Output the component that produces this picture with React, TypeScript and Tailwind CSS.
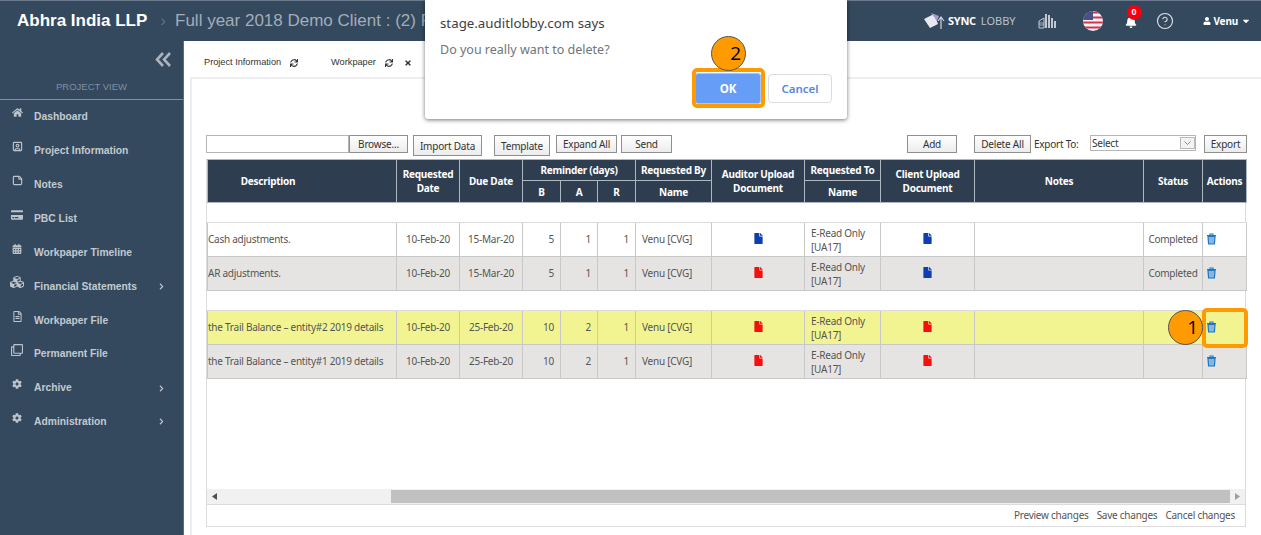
import type { ReactNode } from "react";
import { CircleHelp, SquareUser, StickyNote } from "lucide-react";
import {
  FaBell,
  FaCalendarAlt,
  FaCaretDown,
  FaChevronRight,
  FaCog,
  FaCreditCard,
  FaCubes,
  FaFile,
  FaHome,
  FaRegClone,
  FaRegFileAlt,
  FaSync,
  FaTimes,
  FaUser,
} from "react-icons/fa";

const sans = "font-['Liberation_Sans',Arial,sans-serif]";
const ui = "font-['Noto_Sans','Open_Sans',sans-serif]";

const menu: { label: string; icon: ReactNode; arrow?: boolean }[] = [
  { label: "Dashboard", icon: <FaHome size={11} /> },
  { label: "Project Information", icon: <SquareUser size={11} strokeWidth={2.5} /> },
  { label: "Notes", icon: <StickyNote size={11} strokeWidth={2.5} /> },
  { label: "PBC List", icon: <FaCreditCard size={12} /> },
  { label: "Workpaper Timeline", icon: <FaCalendarAlt size={10} /> },
  { label: "Financial Statements", icon: <FaCubes size={14} />, arrow: true },
  { label: "Workpaper File", icon: <FaRegFileAlt size={11} /> },
  { label: "Permanent File", icon: <FaRegClone size={12} /> },
  { label: "Archive", icon: <FaCog size={10} />, arrow: true },
  { label: "Administration", icon: <FaCog size={10} />, arrow: true },
];

type Row = {
  desc: string;
  requested: string;
  due: string;
  b: number;
  a: number;
  r: number;
  auditor: "blue" | "red";
  client: "blue" | "red";
  status: string;
  bg: string;
};

const rowsA: Row[] = [
  { desc: "Cash adjustments.", requested: "10-Feb-20", due: "15-Mar-20", b: 5, a: 1, r: 1, auditor: "blue", client: "blue", status: "Completed", bg: "bg-white" },
  { desc: "AR adjustments.", requested: "10-Feb-20", due: "15-Mar-20", b: 5, a: 1, r: 1, auditor: "red", client: "blue", status: "Completed", bg: "bg-[#e5e4e2]" },
];

const rowsB: Row[] = [
  { desc: "the Trail Balance – entity#2 2019 details", requested: "10-Feb-20", due: "25-Feb-20", b: 10, a: 2, r: 1, auditor: "red", client: "red", status: "", bg: "bg-[#f2f491]" },
  { desc: "the Trail Balance – entity#1 2019 details", requested: "10-Feb-20", due: "25-Feb-20", b: 10, a: 2, r: 1, auditor: "red", client: "red", status: "", bg: "bg-[#e5e4e2]" },
];

function Btn({ children, className }: { children: ReactNode; className: string }) {
  return (
    <button
      type="button"
      className={`h-[18px] border border-[#8f8f8f] bg-gradient-to-b from-white to-[#ececec] text-[10px] leading-none tracking-[-0.2px] text-[#333] ${className}`}
    >
      {children}
    </button>
  );
}

function Trash() {
  return (
    <svg width="11" height="12" viewBox="0 0 11 12" className="mx-auto block -translate-x-[13px] -translate-y-[1px]">
      <path d="M2 3.5h7l-.6 7.5H2.6z" fill="#8fb4d8" stroke="#1a78c8" strokeWidth="1.2" />
      <path d="M1 2.5h9M4 2.3V1h3v1.3" fill="none" stroke="#1a78c8" strokeWidth="1.1" />
    </svg>
  );
}

function Doc({ color }: { color: "blue" | "red" }) {
  return <FaFile size={11} className={`mx-auto -translate-y-[1px] ${color === "red" ? "text-[#f50f0f]" : "text-[#0d3fb0]"}`} />;
}

const th = "border border-[#aeb6bf] px-0 text-center align-middle font-bold text-white";
const td = "border border-[#c8c8c8] px-[6px] align-middle";

function DataRow({ row }: { row: Row }) {
  return (
    <tr className={`h-[34px] ${row.bg}`}>
      <td className={`${td} !pl-0 whitespace-nowrap`}>{row.desc}</td>
      <td className={`${td} !px-0 text-center`}>{row.requested}</td>
      <td className={`${td} !px-0 text-center`}>{row.due}</td>
      <td className={`${td} text-right`}>{row.b}</td>
      <td className={`${td} text-right`}>{row.a}</td>
      <td className={`${td} text-right`}>{row.r}</td>
      <td className={`${td}`}>Venu [CVG]</td>
      <td className={td}>
        <Doc color={row.auditor} />
      </td>
      <td className={`${td} leading-[14px]`}>
        E-Read Only
        <br />
        [UA17]
      </td>
      <td className={td}>
        <Doc color={row.client} />
      </td>
      <td className={td} />
      <td className={`${td} !px-[4px] text-center`}>{row.status}</td>
      <td className={td}>
        <Trash />
      </td>
    </tr>
  );
}

function SpacerRow({ h }: { h: string }) {
  return (
    <tr className={h}>
      <td colSpan={13} className="border-b border-[#dcdcdc]" />
    </tr>
  );
}

export default function App() {
  return (
    <div className={`relative flex h-[535px] w-[1261px] flex-col overflow-hidden bg-white ${sans}`}>
      <header className="flex h-[41px] shrink-0 items-center border-t border-[#6b7a8c] bg-[#34495e] pl-[17px] pr-[10px]">
        <span className="text-[17px] font-bold text-white">Abhra India LLP</span>
        <span className="ml-[13px] text-[17px] text-[#5f7186]">›</span>
        <span className="ml-[9px] whitespace-nowrap text-[17px] text-[#a3adb8]">Full year 2018 Demo Client : (2) Full</span>
        <div className="ml-auto flex items-center text-white">
          <svg width="24" height="18" viewBox="0 0 24 18">
            <path d="M1 7l10-5 4 10-8 4z" fill="#e8e8f0" />
            <path d="M8 1l8 3-2 5z" fill="#a79bd6" />
            <path d="M18 17V6m-3 3l3-4 3 4" fill="none" stroke="#d0d4da" strokeWidth="1.2" />
          </svg>
          <span className={`ml-[1px] text-[11px] font-bold tracking-tight ${ui}`}>SYNC</span>
          <span className={`ml-[5px] text-[11px] text-[#b9c1ca] ${ui}`}>LOBBY</span>
          <svg width="20" height="16" viewBox="0 0 20 16" className="ml-[21px]">
            <path d="M9 1v14M12 2v13M15 5v10M18 8v7" stroke="#e4e7ea" strokeWidth="1.6" />
            <path d="M2 8l5-3v10H2z" fill="none" stroke="#c4cad1" strokeWidth="1" />
            <path d="M2 10h5M2 12h5" stroke="#c4cad1" strokeWidth="0.8" />
          </svg>
          <svg width="20" height="20" viewBox="0 0 20 20" className="ml-[26px]">
            <defs>
              <clipPath id="flagClip">
                <circle cx="10" cy="10" r="10" />
              </clipPath>
            </defs>
            <g clipPath="url(#flagClip)">
              <rect width="20" height="20" fill="#f4f4f6" />
              <path d="M0 1.5h20M0 6.5h20M0 11.5h20M0 16.5h20" stroke="#d6324a" strokeWidth="2.2" />
              <rect width="10" height="9" fill="#4a4f8c" />
            </g>
          </svg>
          <div className="relative ml-[22px] translate-y-[1px]">
            <FaBell size={12} />
            <span className="absolute -right-[5px] -top-[11px] flex h-[15px] w-[15px] items-center justify-center rounded-full bg-[#f5000f] text-[9px] font-bold text-white">
              0
            </span>
          </div>
          <CircleHelp size={18} strokeWidth={1.5} className="ml-[19px] text-[#e0e4e8]" />
          <FaUser size={8} className="ml-[29px]" />
          <span className={`ml-[3px] text-[10px] font-bold tracking-[-0.2px] ${ui}`}>Venu</span>
          <FaCaretDown size={10} className="ml-[3px]" />
        </div>
      </header>

      <div className="flex min-h-0 flex-1">
        <aside className="w-[184px] shrink-0 border-r border-[#5a6e85] bg-[#34495e]">
          <div className="flex h-[36px] items-center justify-end pr-[11px]">
            <svg width="17" height="15" viewBox="0 0 17 15">
              <path d="M8 1L2 7.5 8 14M15 1L9 7.5 15 14" fill="none" stroke="#aab4bf" strokeWidth="2.6" />
            </svg>
          </div>
          <div className="h-[23px] border-b border-[#7f90a4] text-center text-[9.5px] leading-[19px] text-[#7e8fa3]">PROJECT VIEW</div>
          <nav>
            {menu.map((item) => (
              <div key={item.label} className="flex h-[33.9px] items-center text-[10.3px] font-bold text-[#c3c9d0]">
                <span className="flex w-[34px] -translate-y-[4px] justify-center pl-[1px] pr-[1px] text-[#bcc3cb]">{item.icon}</span>
                <span>{item.label}</span>
                {item.arrow && <FaChevronRight size={7} className="ml-auto mr-[18px]" />}
              </div>
            ))}
          </nav>
        </aside>

        <main className="min-w-0 flex-1">
          <div className={`flex h-[36px] items-center pl-[20px] pt-[7px] text-[9.2px] text-[#333] ${sans}`}>
            <span>Project Information</span>
            <FaSync size={8} className="ml-[9px]" />
            <span className="ml-[33px]">Workpaper</span>
            <FaSync size={8} className="ml-[9px]" />
            <FaTimes size={8} className="ml-[11px]" />
          </div>
          <div className={`ml-[6px] h-[458px] border-l-2 border-t-2 border-[#eeeeee] pl-[15px] pt-[56px] text-[10px] tracking-[-0.25px] text-[#555] ${ui}`}>
            <div className="-ml-[1px] flex h-[25px] w-[1041px] items-start">
              <div className="h-[18px] w-[143px] border border-[#b5b5b5] bg-white" />
              <Btn className="w-[59px]">Browse...</Btn>
              <Btn className="ml-[5px] !h-[21px] w-[69px]">Import Data</Btn>
              <Btn className="ml-[12px] !h-[21px] w-[56px]">Template</Btn>
              <Btn className="ml-[6px] w-[61px]">Expand All</Btn>
              <Btn className="ml-[4px] w-[51px]">Send</Btn>
              <Btn className="ml-[235px] w-[50px]">Add</Btn>
              <Btn className="ml-[17px] w-[57px]">Delete All</Btn>
              <span className="ml-[3px] w-[56px] leading-[18px] text-[#333]">Export To:</span>
              <div className="flex h-[16px] w-[106px] items-center border border-[#b5b5b5] pl-[1px] text-[#333]">
                Select
                <span className="ml-auto flex h-[12px] w-[15px] items-center justify-center border border-[#bbb] bg-[#f3f3f3] text-[#888]">
                  <svg width="7" height="5" viewBox="0 0 7 5">
                    <path d="M.5.5l3 3 3-3" fill="none" stroke="#888" />
                  </svg>
                </span>
              </div>
              <Btn className="ml-[8px] w-[43px]">Export</Btn>
            </div>

            <div className="-ml-[1px] -mt-[1px] flex h-[368px] w-[1040px] flex-col border-b border-r border-l border-[#dcdcdc]">
              <table className="w-[1039px] table-fixed border-collapse">
                <colgroup>
                  <col className="w-[189px]" />
                  <col className="w-[63px]" />
                  <col className="w-[63px]" />
                  <col className="w-[38px]" />
                  <col className="w-[37px]" />
                  <col className="w-[38px]" />
                  <col className="w-[76px]" />
                  <col className="w-[93px]" />
                  <col className="w-[76px]" />
                  <col className="w-[94px]" />
                  <col className="w-[169px]" />
                  <col className="w-[59px]" />
                  <col className="w-[44px]" />
                </colgroup>
                <thead className="bg-[#2e3e50] leading-[14px]">
                  <tr className="h-[21px]">
                    <th rowSpan={2} className={`${th} !pr-[68px]`}>Description</th>
                    <th rowSpan={2} className={th}>Requested<br />Date</th>
                    <th rowSpan={2} className={th}>Due Date</th>
                    <th colSpan={3} className={th}>Reminder (days)</th>
                    <th className={th}>Requested By</th>
                    <th rowSpan={2} className={th}>Auditor Upload<br />Document</th>
                    <th className={th}>Requested To</th>
                    <th rowSpan={2} className={th}>Client Upload<br />Document</th>
                    <th rowSpan={2} className={th}>Notes</th>
                    <th rowSpan={2} className={th}>Status</th>
                    <th rowSpan={2} className={th}>Actions</th>
                  </tr>
                  <tr className="h-[22px]">
                    <th className={th}>B</th>
                    <th className={th}>A</th>
                    <th className={th}>R</th>
                    <th className={th}>Name</th>
                    <th className={th}>Name</th>
                  </tr>
                </thead>
                <tbody>
                  <SpacerRow h="h-[20px]" />
                  {rowsA.map((row) => (
                    <DataRow key={row.desc} row={row} />
                  ))}
                  <SpacerRow h="h-[20px]" />
                  {rowsB.map((row) => (
                    <DataRow key={row.desc} row={row} />
                  ))}
                </tbody>
              </table>
              <div className="min-h-0 flex-1" />
              <div className="flex h-[15px] shrink-0 items-center bg-[#f1f1f1]">
                <span className="flex w-[14px] justify-center">
                  <svg width="5" height="7" viewBox="0 0 5 7"><path d="M5 0v7L0 3.5z" fill="#505050" /></svg>
                </span>
                <span className="ml-[170px] h-[13px] flex-1 bg-[#c1c1c1]" />
                <span className="flex w-[15px] justify-center">
                  <svg width="5" height="7" viewBox="0 0 5 7"><path d="M0 0v7l5-3.5z" fill="#a0a0a0" /></svg>
                </span>
              </div>
              <div className="flex h-[22px] shrink-0 items-center justify-end gap-[8px] border-t border-[#dcdcdc] pr-[10px] text-[#555]">
                <span>Preview changes</span>
                <span>Save changes</span>
                <span>Cancel changes</span>
              </div>
            </div>
          </div>
        </main>
      </div>

      {/* browser confirm dialog */}
      <div className={`absolute left-[425px] top-0 h-[119px] w-[422px] rounded-b-[3px] bg-white shadow-[0_1px_4px_rgba(0,0,0,0.55)] ${ui}`}>
        <div className="ml-[15px] mt-[13px] text-[13.3px] leading-[20px] text-[#3c4043]">stage.auditlobby.com says</div>
        <div className="ml-[15px] mt-[8px] text-[12.5px] leading-[18px] text-[#70757a]">Do you really want to delete?</div>
        <div className="absolute left-[270px] top-[73px] flex h-[31px] w-[66px] items-center justify-center rounded-[3px] border border-[#a9c6f8] bg-[#669df6] text-[11.5px] font-bold text-white">
          OK
        </div>
        <div className="absolute left-[343px] top-[74px] flex h-[29px] w-[64px] items-center justify-center rounded-[4px] border border-[#dadce0] bg-white text-[11.5px] font-semibold text-[#5a86e0]">
          Cancel
        </div>
      </div>

      {/* numbered annotations */}
      <div className="absolute left-[692px] top-[68px] h-[40px] w-[73px] rounded-[5px] border-[4px] border-[#ff9a00]" />
      <div className="absolute left-[711px] top-[36px] flex h-[35px] w-[35px] items-center justify-end rounded-full border border-[#555] bg-[#ff9a00] pr-[4px] font-['Open_Sans',sans-serif] text-[19px] text-black">
        2
      </div>
      <div className="absolute left-[1202px] top-[308px] h-[40px] w-[46px] rounded-[5px] border-[4px] border-[#ff9a00]" />
      <div className="absolute left-[1168px] top-[310px] flex h-[35px] w-[35px] items-center justify-end rounded-full border border-[#555] bg-[#ff9a00] pr-[4px] font-['Open_Sans',sans-serif] text-[19px] text-black">
        1
      </div>
    </div>
  );
}
